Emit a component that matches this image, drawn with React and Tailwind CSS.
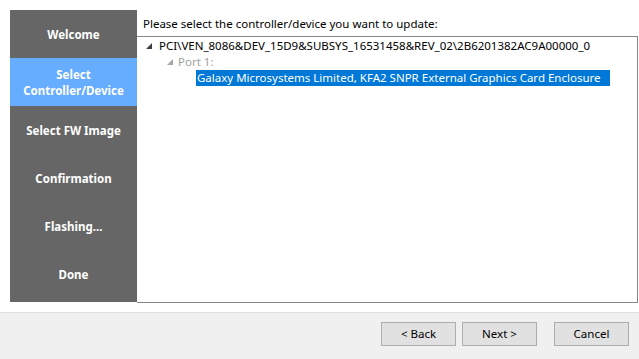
const steps = [
  { label: ["Welcome"] },
  { label: ["Select", "Controller/Device"], active: true },
  { label: ["Select FW Image"] },
  { label: ["Confirmation"] },
  { label: ["Flashing..."] },
  { label: ["Done"] },
]

function Expander({ muted }) {
  return (
    <svg width="6" height="6" viewBox="0 0 6 6" className="shrink-0">
      <polygon points="6,0 6,6 0,6" fill={muted ? "#a6a6a6" : "#404040"} />
    </svg>
  )
}

export default function App() {
  return (
    <div className="w-[639px] h-[359px] flex flex-col bg-white font-['Noto_Sans',sans-serif] text-[11.5px] text-black overflow-hidden whitespace-nowrap">
      {/* main area */}
      <div className="h-[312px] flex pt-[10px] pl-[10px] pr-[1px]">
        {/* steps sidebar */}
        <div className="w-[127px] h-[292px] bg-[#666666] flex flex-col">
          {steps.map((s, i) => (
            <div
              key={i}
              className={`h-[48px] shrink-0 flex flex-col items-center justify-center font-bold text-white leading-[16px] pt-[1px] ${s.active ? "bg-[#66acff]" : ""}`}
            >
              {s.label.map(l => <span key={l}>{l}</span>)}
            </div>
          ))}
        </div>

        {/* content */}
        <div className="flex-1 flex flex-col">
          <div className="h-[26px] flex items-center pl-[6px] pt-[1px]">
            Please select the controller/device you want to update:
          </div>
          <div className="h-[267px] border-t border-r border-b border-[#828790] pt-[1px] leading-[16px]">
            <div className="h-[16px] flex items-center pl-[9px] gap-[7px]">
              <Expander />
              <span>PCI\VEN_8086&amp;DEV_15D9&amp;SUBSYS_16531458&amp;REV_02\2B6201382AC9A00000_0</span>
            </div>
            <div className="h-[16px] flex items-center pl-[30px] gap-[5px] text-[#a0a0a0]">
              <Expander muted />
              <span>Port 1:</span>
            </div>
            <div className="h-[16px] flex items-center pl-[59px]">
              <span className="w-[414px] h-[16px] bg-[#0078d7] text-white pl-[1px]">
                Galaxy Microsystems Limited, KFA2 SNPR External Graphics Card Enclosure
              </span>
            </div>
          </div>
        </div>
      </div>

      {/* footer */}
      <div className="flex-1 bg-[#f0f0f0] border-t border-[#dfdfdf] flex items-start pt-[9px] pl-[381px]">
        <button className="w-[75px] h-[24px] bg-[#e1e1e1] border border-[#adadad]">&lt; Back</button>
        <button className="w-[75px] h-[24px] bg-[#e1e1e1] border border-[#adadad] ml-[6px]">Next &gt;</button>
        <button className="w-[75px] h-[24px] bg-[#e1e1e1] border border-[#adadad] ml-[17px]">Cancel</button>
      </div>
    </div>
  )
}
